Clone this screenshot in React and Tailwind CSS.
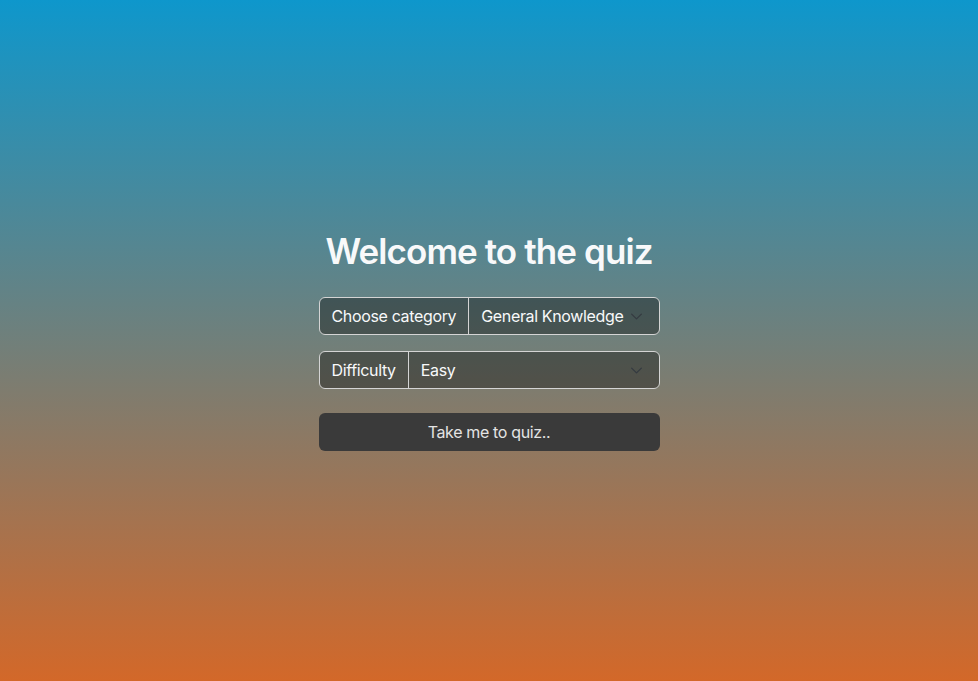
import React, { useState } from 'react';

const Chevron = () => (
  <svg width="13" height="13" viewBox="0 0 16 16" fill="none" className="shrink-0">
    <path d="M2 5l6 6 6-6" stroke="#343a40" strokeWidth="1.5" strokeLinecap="round" strokeLinejoin="round" />
  </svg>
);

const App = () => {
  const [category, setCategory] = useState('General Knowledge');
  const [difficulty, setDifficulty] = useState('Easy');

  return (
    <div
      className="min-h-[681px] w-full flex flex-col items-center bg-[linear-gradient(to_bottom,#0e97cc,#d36829)] pt-[228px]"
      style={{ fontFamily: 'Inter, "Noto Sans", sans-serif' }}
    >
      <h1 className="text-[35px] font-semibold text-[#f8f9fa] tracking-[-0.9px] leading-[46px]">Welcome to the quiz</h1>

      <div className="w-[341px] mt-[23px] flex flex-col text-[16px] tracking-[-0.35px]">
        <div className="flex h-[38px] rounded-[6px] border border-[#d4d4d4] bg-black/35 text-[#f8f9fa]">
          <div className="flex items-center px-3 border-r border-[#d4d4d4] whitespace-nowrap">Choose category</div>
          <div className="flex flex-1 items-center justify-between pl-3 pr-4 whitespace-nowrap">
            <span>{category}</span>
            <Chevron />
          </div>
        </div>

        <div className="flex h-[38px] mt-4 rounded-[6px] border border-[#d4d4d4] bg-black/35 text-[#f8f9fa]">
          <div className="flex items-center px-3 border-r border-[#d4d4d4]">Difficulty</div>
          <div className="flex flex-1 items-center justify-between pl-3 pr-4">
            <span>{difficulty}</span>
            <Chevron />
          </div>
        </div>

        <button
          className="mt-6 h-[38px] w-full rounded-[6px] bg-[#3a3a3a] text-[#e4e4e4]"
          onClick={() => setDifficulty(difficulty)}
        >
          Take me to quiz..
        </button>
      </div>
    </div>
  );
};

export default App;
